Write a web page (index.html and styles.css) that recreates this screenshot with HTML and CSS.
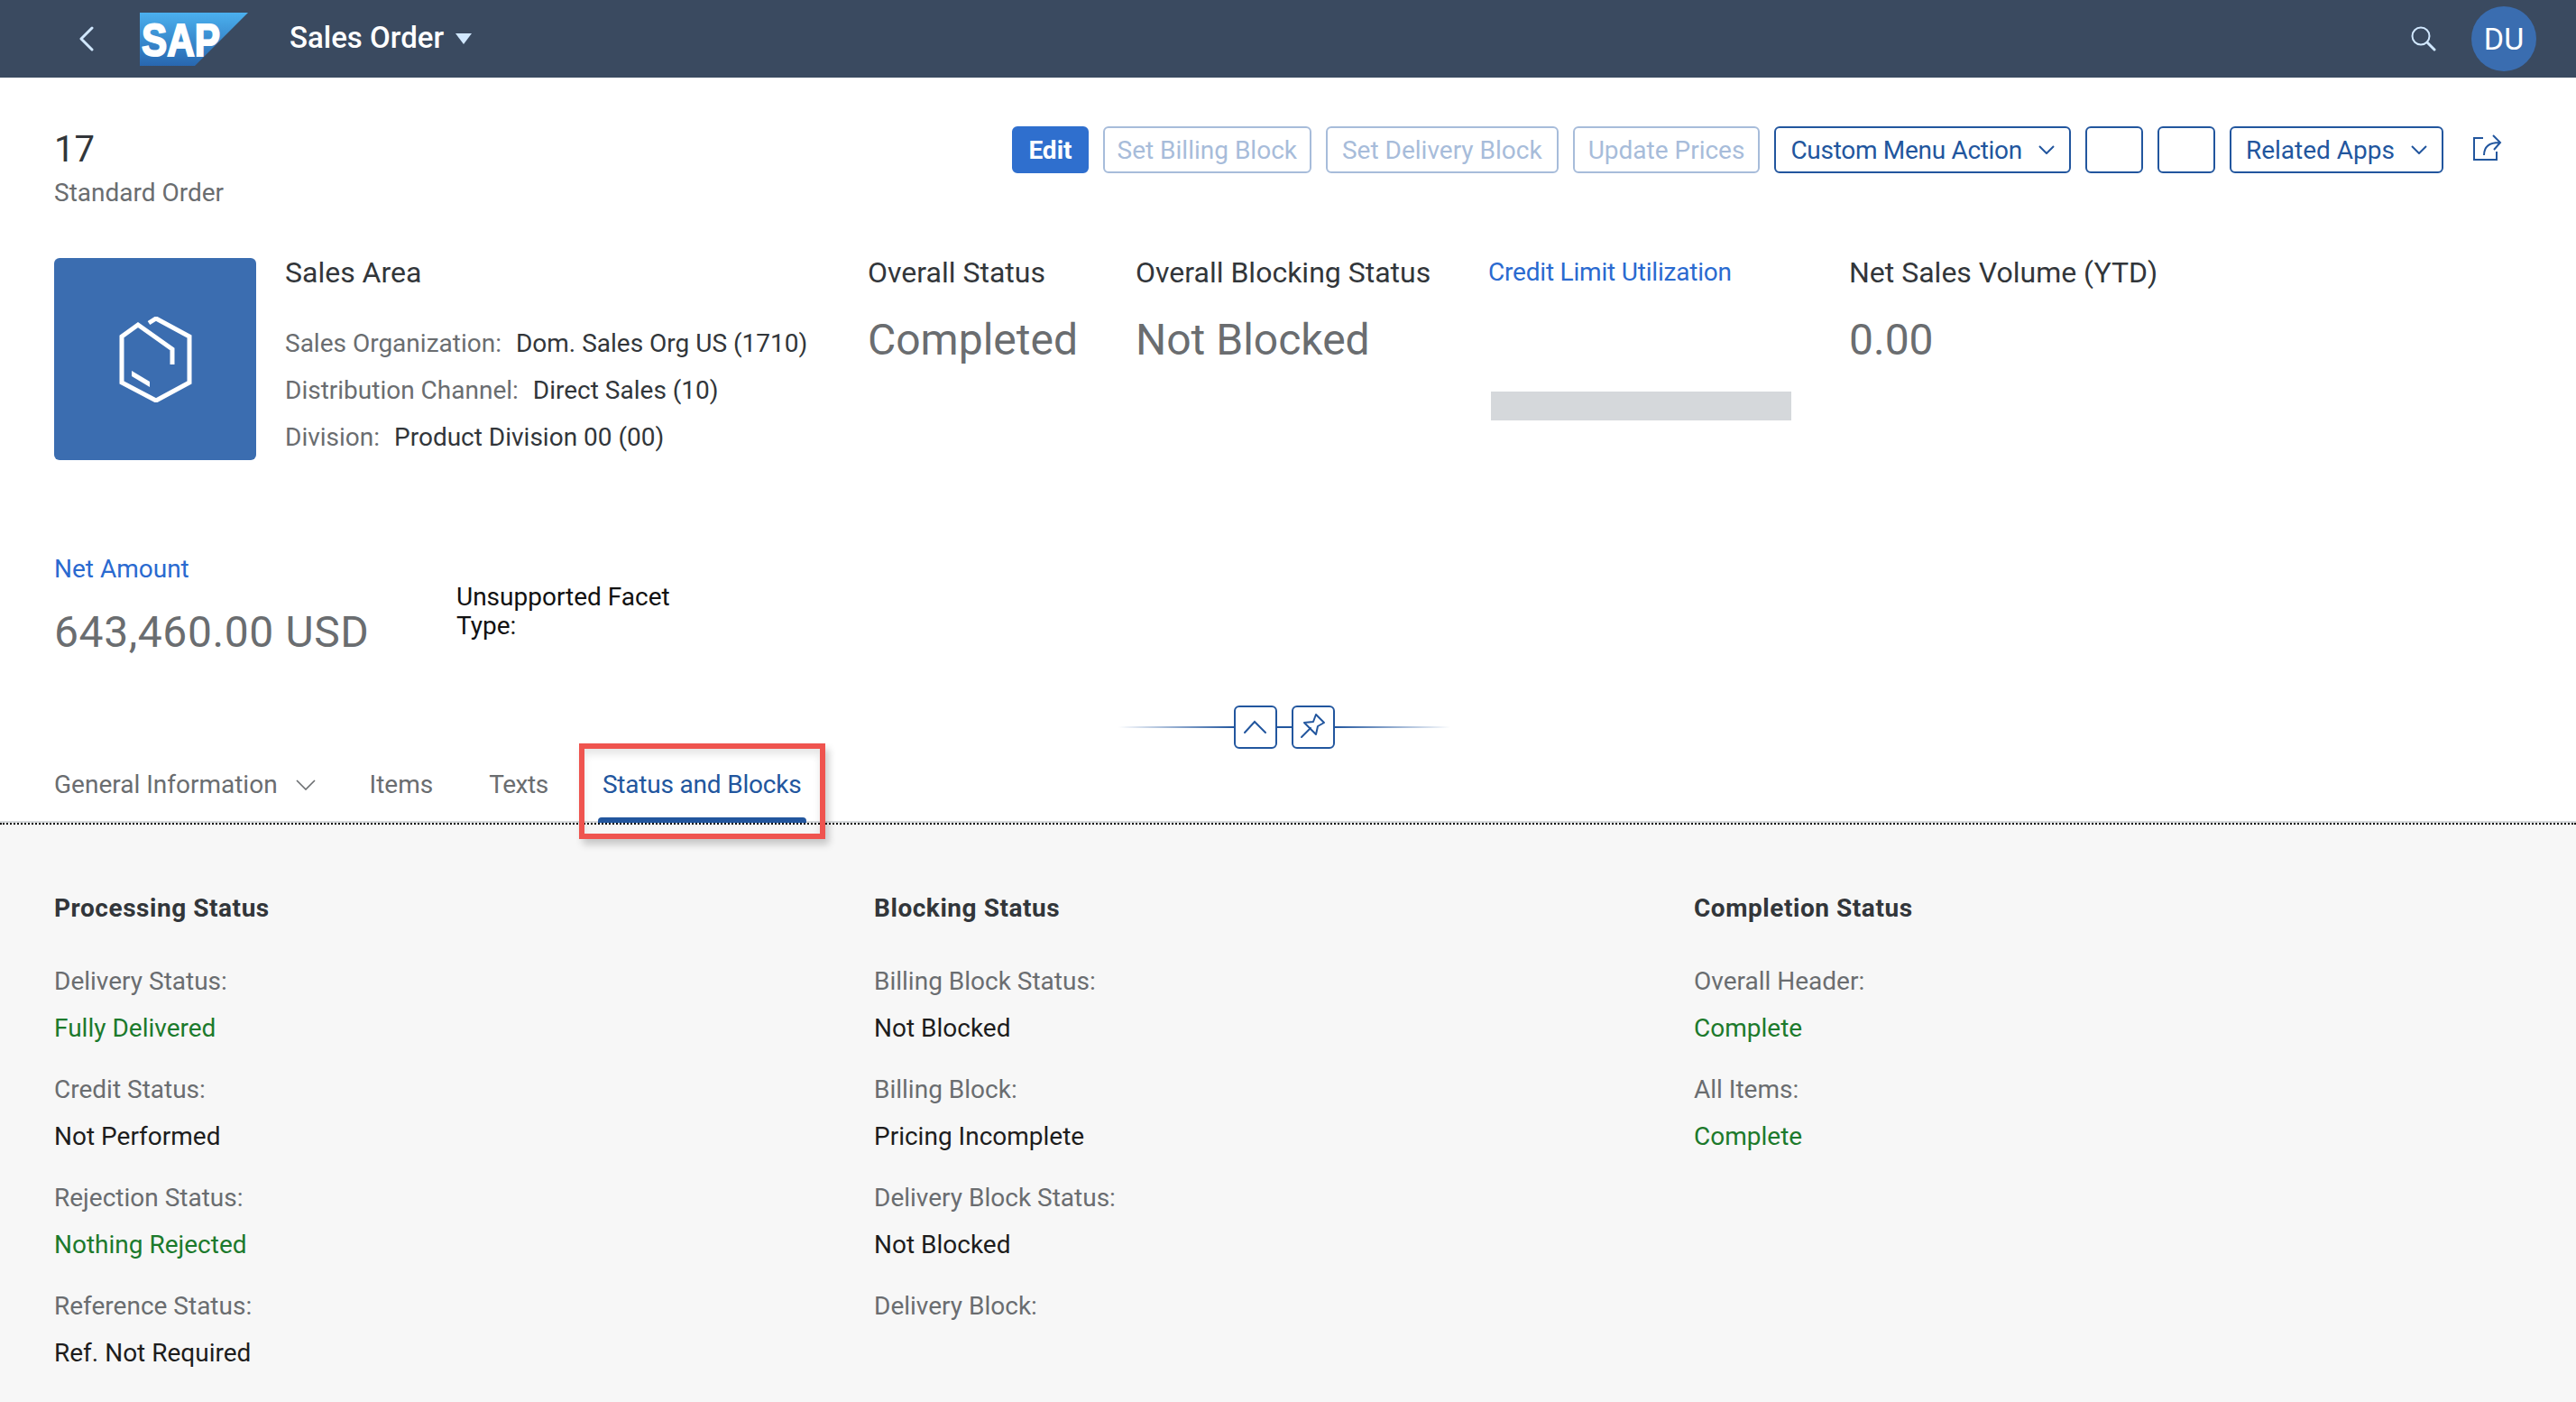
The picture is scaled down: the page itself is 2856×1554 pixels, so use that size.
FILE: index.html
```html
<!DOCTYPE html>
<html lang="en">
<head>
    <meta charset="UTF-8">
    <title>Sales Order</title>
    <link rel="stylesheet" href="styles.css">
</head>
<body>
    <header class="shell">
        <svg class="shell-back" width="16" height="28" viewBox="0 0 16 28"><path d="M14 2 L2 14 L14 26" fill="none" stroke="#d1e8ff" stroke-width="3" stroke-linecap="round" stroke-linejoin="round"/></svg>
        <svg class="shell-logo" width="120" height="59" viewBox="0 0 120 59">
            <defs>
                <linearGradient id="sapBlue" x1="0" y1="0" x2="0" y2="1">
                    <stop offset="0" stop-color="#4bb0ee"/>
                    <stop offset="1" stop-color="#2867b0"/>
                </linearGradient>
            </defs>
            <polygon points="0,0 120,0 61,59 0,59" fill="url(#sapBlue)"/>
            <text x="2" y="48" class="logo-text" textLength="87" lengthAdjust="spacingAndGlyphs">SAP</text>
        </svg>
        <span class="shell-title">Sales Order</span>
        <svg class="shell-caret" width="18" height="12" viewBox="0 0 18 12"><polygon points="0,0 18,0 9,12" fill="#d1e8ff"/></svg>
        <svg class="shell-search" width="28" height="28" viewBox="0 0 28 28"><circle cx="11" cy="11" r="9.5" fill="none" stroke="#d1e8ff" stroke-width="2"/><path d="M18 18 L26 26" stroke="#d1e8ff" stroke-width="3" stroke-linecap="round"/></svg>
        <div class="avatar">DU</div>
    </header>

    <section class="object-header">
        <div class="title-row">
            <div class="title-block">
                <div class="object-id">17</div>
                <div class="object-type">Standard Order</div>
            </div>
            <div class="toolbar">
                <button class="btn btn-primary">Edit</button>
                <button class="btn btn-disabled btn-billing">Set Billing Block</button>
                <button class="btn btn-disabled">Set Delivery Block</button>
                <button class="btn btn-disabled btn-prices">Update Prices</button>
                <button class="btn btn-menu btn-custom">Custom Menu Action
                    <svg width="18" height="10" viewBox="0 0 18 10"><path d="M1 1 L9 9 L17 1" fill="none" stroke="#22569e" stroke-width="2"/></svg>
                </button>
                <button class="btn btn-empty"></button>
                <button class="btn btn-empty"></button>
                <button class="btn btn-menu">Related Apps
                    <svg width="18" height="10" viewBox="0 0 18 10"><path d="M1 1 L9 9 L17 1" fill="none" stroke="#22569e" stroke-width="2"/></svg>
                </button>
                <svg class="share" width="34" height="32" viewBox="0 0 34 32"><path d="M12 5 H2 V29 H27 V20" fill="none" stroke="#22569e" stroke-width="2"/><path d="M13 24 C13 14 19 10 30 10 M23 2 L31 10 L24 18" fill="none" stroke="#22569e" stroke-width="2"/></svg>
            </div>
        </div>

        <div class="facets">
            <div class="object-image">
                <svg width="81" height="95" viewBox="0 0 81 95">
                    <path d="M3 53 L3 22 L21 9 L59 36 L59 53 M3 53 L3 73 L41 93 L78 73 L78 22 L41 2 L33 7" fill="none" stroke="#fff" stroke-width="5"/>
                    <polygon points="14,60 34,72 34,78 14,66" fill="#fff"/>
                </svg>
            </div>
            <div class="facet-area">
                <div class="facet-title">Sales Area</div>
                <div class="area-rows">
                    <div class="area-row"><span class="lbl">Sales Organization:</span><span>Dom. Sales Org US (1710)</span></div>
                    <div class="area-row"><span class="lbl">Distribution Channel:</span><span>Direct Sales (10)</span></div>
                    <div class="area-row"><span class="lbl">Division:</span><span>Product Division 00 (00)</span></div>
                </div>
            </div>
            <div class="facet facet-overall">
                <div class="facet-title">Overall Status</div>
                <div class="facet-value">Completed</div>
            </div>
            <div class="facet facet-blocking">
                <div class="facet-title">Overall Blocking Status</div>
                <div class="facet-value">Not Blocked</div>
            </div>
            <div class="facet facet-credit">
                <a class="facet-link">Credit Limit Utilization</a>
                <div class="credit-bar"></div>
            </div>
            <div class="facet">
                <div class="facet-title">Net Sales Volume (YTD)</div>
                <div class="facet-value">0.00</div>
            </div>
        </div>

        <div class="facets-second">
            <div class="facet-net">
                <a class="facet-link">Net Amount</a>
                <div class="facet-value">643,460.00 USD</div>
            </div>
            <div class="unsupported">Unsupported Facet<br>Type:</div>
        </div>

        <div class="collapse-bar">
            <div class="collapse-line"></div>
            <button class="collapse-btn"><svg width="44" height="44" viewBox="0 0 44 44"><path d="M10 28 L21 16 L33 28" fill="none" stroke="#22569e" stroke-width="2" stroke-linecap="round"/></svg></button>
            <div class="collapse-gap"></div>
            <button class="collapse-btn"><svg width="44" height="44" viewBox="0 0 44 44"><path d="M9 33 L19 23" fill="none" stroke="#22569e" stroke-width="2" stroke-linecap="round"/><polygon points="12,17 22,16 25,8 34,17 27,21 25,30" fill="none" stroke="#22569e" stroke-width="2" stroke-linejoin="round"/></svg></button>
            <div class="collapse-line collapse-line-right"></div>
        </div>
    </section>

    <nav class="tabs">
        <div class="tab tab-general">General Information
            <svg width="22" height="12" viewBox="0 0 22 12"><path d="M1 1 L11 11 L21 1" fill="none" stroke="#6a6d70" stroke-width="1.6"/></svg>
        </div>
        <div class="tab tab-items">Items</div>
        <div class="tab tab-texts">Texts</div>
        <div class="tab tab-active">Status and Blocks
            <div class="tab-highlight"></div>
        </div>
    </nav>

    <main class="content">
        <div class="group">
            <h3>Processing Status</h3>
            <div class="field"><div class="lbl">Delivery Status:</div><div class="val ok">Fully Delivered</div></div>
            <div class="field"><div class="lbl">Credit Status:</div><div class="val">Not Performed</div></div>
            <div class="field"><div class="lbl">Rejection Status:</div><div class="val ok">Nothing Rejected</div></div>
            <div class="field"><div class="lbl">Reference Status:</div><div class="val">Ref. Not Required</div></div>
        </div>
        <div class="group">
            <h3>Blocking Status</h3>
            <div class="field"><div class="lbl">Billing Block Status:</div><div class="val">Not Blocked</div></div>
            <div class="field"><div class="lbl">Billing Block:</div><div class="val">Pricing Incomplete</div></div>
            <div class="field"><div class="lbl">Delivery Block Status:</div><div class="val">Not Blocked</div></div>
            <div class="field"><div class="lbl">Delivery Block:</div></div>
        </div>
        <div class="group">
            <h3>Completion Status</h3>
            <div class="field"><div class="lbl">Overall Header:</div><div class="val ok">Complete</div></div>
            <div class="field"><div class="lbl">All Items:</div><div class="val ok">Complete</div></div>
        </div>
    </main>
</body>
</html>
```

FILE: styles.css
```css
* {
    box-sizing: border-box;
}
body {
    font-family: Roboto, "Noto Sans", sans-serif;
    font-size: 28px;
    color: #32363a;
    margin: 0;
    height: 100vh;
    overflow: hidden;
    background: #fff;
}
button {
    font: inherit;
    background: #fff;
    cursor: pointer;
}

/* shell bar */
.shell {
    height: 86px;
    background: #3a4a60;
    display: flex;
    align-items: center;
    color: #fff;
}
.shell-back {
    margin-left: 88px;
}
.shell-logo {
    margin-left: 51px;
}
.logo-text {
    font-family: "Liberation Sans", sans-serif;
    font-weight: bold;
    font-size: 50px;
    fill: #fff;
    stroke: #fff;
    stroke-width: 2;
}
.shell-title {
    margin: -3px 0 0 46px;
    font-size: 33px;
    font-weight: 500;
}
.shell-caret {
    margin-left: 13px;
}
.shell-search {
    margin-left: auto;
}
.avatar {
    width: 72px;
    height: 72px;
    margin: 0 44px 0 39px;
    border-radius: 50%;
    background: #3a6db0;
    display: flex;
    align-items: center;
    justify-content: center;
    font-size: 34px;
}

/* object header */
.object-header {
    padding: 54px 0 0 60px;
}
.title-row {
    display: flex;
    justify-content: space-between;
    height: 146px;
}
.object-id {
    font-size: 40px;
    line-height: 52px;
}
.object-type {
    color: #6a6d70;
    line-height: 44px;
}
.toolbar {
    display: flex;
    align-items: flex-start;
    gap: 16px;
    margin-right: 81px;
}
.btn {
    height: 52px;
    padding: 0 16px;
    border: 2px solid #22569e;
    border-radius: 6px;
    color: #22569e;
    white-space: nowrap;
}
.btn-menu {
    display: flex;
    align-items: center;
}
.btn-menu svg {
    margin-left: 18px;
}
.btn-custom {
    letter-spacing: -0.3px;
}
.btn-primary {
    background: #2f6fce;
    border-color: #2f6fce;
    color: #fff;
    font-weight: bold;
}
.btn-disabled {
    border-color: #a7bcda;
    color: #a7bcda;
}
.btn-billing {
    padding: 0 14px;
}
.btn-prices {
    padding: 0 15px;
}
.btn-empty {
    width: 64px;
}
.share {
    margin: 8px 0 0 16px;
}

.facets {
    display: flex;
    height: 224px;
}
.object-image {
    width: 224px;
    height: 224px;
    background: #3b6db0;
    border-radius: 6px;
    display: flex;
    align-items: center;
    justify-content: center;
}
.facet-area {
    margin-left: 32px;
    width: 646px;
}
.facet-title {
    font-size: 32px;
    line-height: 32px;
}
.area-rows {
    margin-top: 37px;
}
.area-row {
    display: flex;
    gap: 16px;
    line-height: 52px;
}
.lbl {
    color: #6a6d70;
}
.facet-overall {
    width: 297px;
}
.facet-blocking {
    width: 391px;
}
.facet-credit {
    width: 400px;
}
.facet-value {
    margin-top: 31px;
    font-size: 48px;
    line-height: 56px;
    color: #6a6d70;
}
.facet-link {
    display: block;
    color: #2a6ad0;
    line-height: 32px;
}
.facet-credit .facet-link {
    letter-spacing: -0.2px;
}
.credit-bar {
    width: 333px;
    height: 32px;
    margin: 116px 0 0 3px;
    background: #d5d8db;
}

.facets-second {
    display: flex;
    margin-top: 105px;
}
.facet-net {
    width: 446px;
}
.facet-net .facet-value {
    margin-top: 26px;
    letter-spacing: 0.6px;
}
.unsupported {
    margin-top: 31px;
    line-height: 32px;
    color: #111;
}

.collapse-bar {
    display: flex;
    align-items: center;
    height: 48px;
    margin: 53px 0 0 1180px;
}
.collapse-line {
    width: 128px;
    height: 2px;
    background: linear-gradient(to right, #fff, #22569e);
}
.collapse-line-right {
    background: linear-gradient(to left, #fff, #22569e);
}
.collapse-gap {
    width: 16px;
    height: 2px;
    background: #22569e;
}
.collapse-btn {
    width: 48px;
    height: 48px;
    padding: 0;
    border: 2px solid #22569e;
    border-radius: 6px;
    display: flex;
}

/* tabs */
.tabs {
    display: flex;
    height: 96px;
    margin-top: -12px;
    padding-left: 60px;
    border-bottom: 2px dotted #000;
    box-shadow: inset 0 -2px 0 #d5d8db;
    color: #6a6d70;
    line-height: 104px;
}
.tab {
    position: relative;
    white-space: nowrap;
}
.tab-general svg {
    margin-left: 13px;
    vertical-align: 3px;
}
.tab-items {
    margin-left: 60px;
}
.tab-texts {
    margin-left: 62px;
    letter-spacing: -0.4px;
}
.tab-active {
    margin-left: 60px;
    color: #22569e;
    letter-spacing: -0.2px;
}
.tab-active::after {
    content: "";
    position: absolute;
    left: -5px;
    right: -6px;
    bottom: 0;
    height: 6px;
    background: #22569e;
    border-radius: 4px 4px 0 0;
}
.tab-highlight {
    position: absolute;
    left: -26px;
    right: -27px;
    top: 6px;
    height: 106px;
    border: 6px solid #ef544f;
    box-shadow: 4px 6px 8px rgba(0, 0, 0, .2), inset 0 6px 8px rgba(0, 0, 0, .1);
    z-index: 2;
}

/* status groups */
.content {
    display: flex;
    height: 640px;
    padding: 73px 0 0 60px;
    background: #f7f7f7;
}
.group {
    width: 909px;
}
.group h3 {
    margin: 0 0 41px;
    font-size: 28px;
    line-height: 40px;
    font-weight: bold;
    letter-spacing: 0.55px;
}
.field {
    height: 120px;
    line-height: 40px;
}
.val {
    margin-top: 12px;
    color: #1d1d1d;
}
.ok {
    color: #1c7a2c;
}
```
